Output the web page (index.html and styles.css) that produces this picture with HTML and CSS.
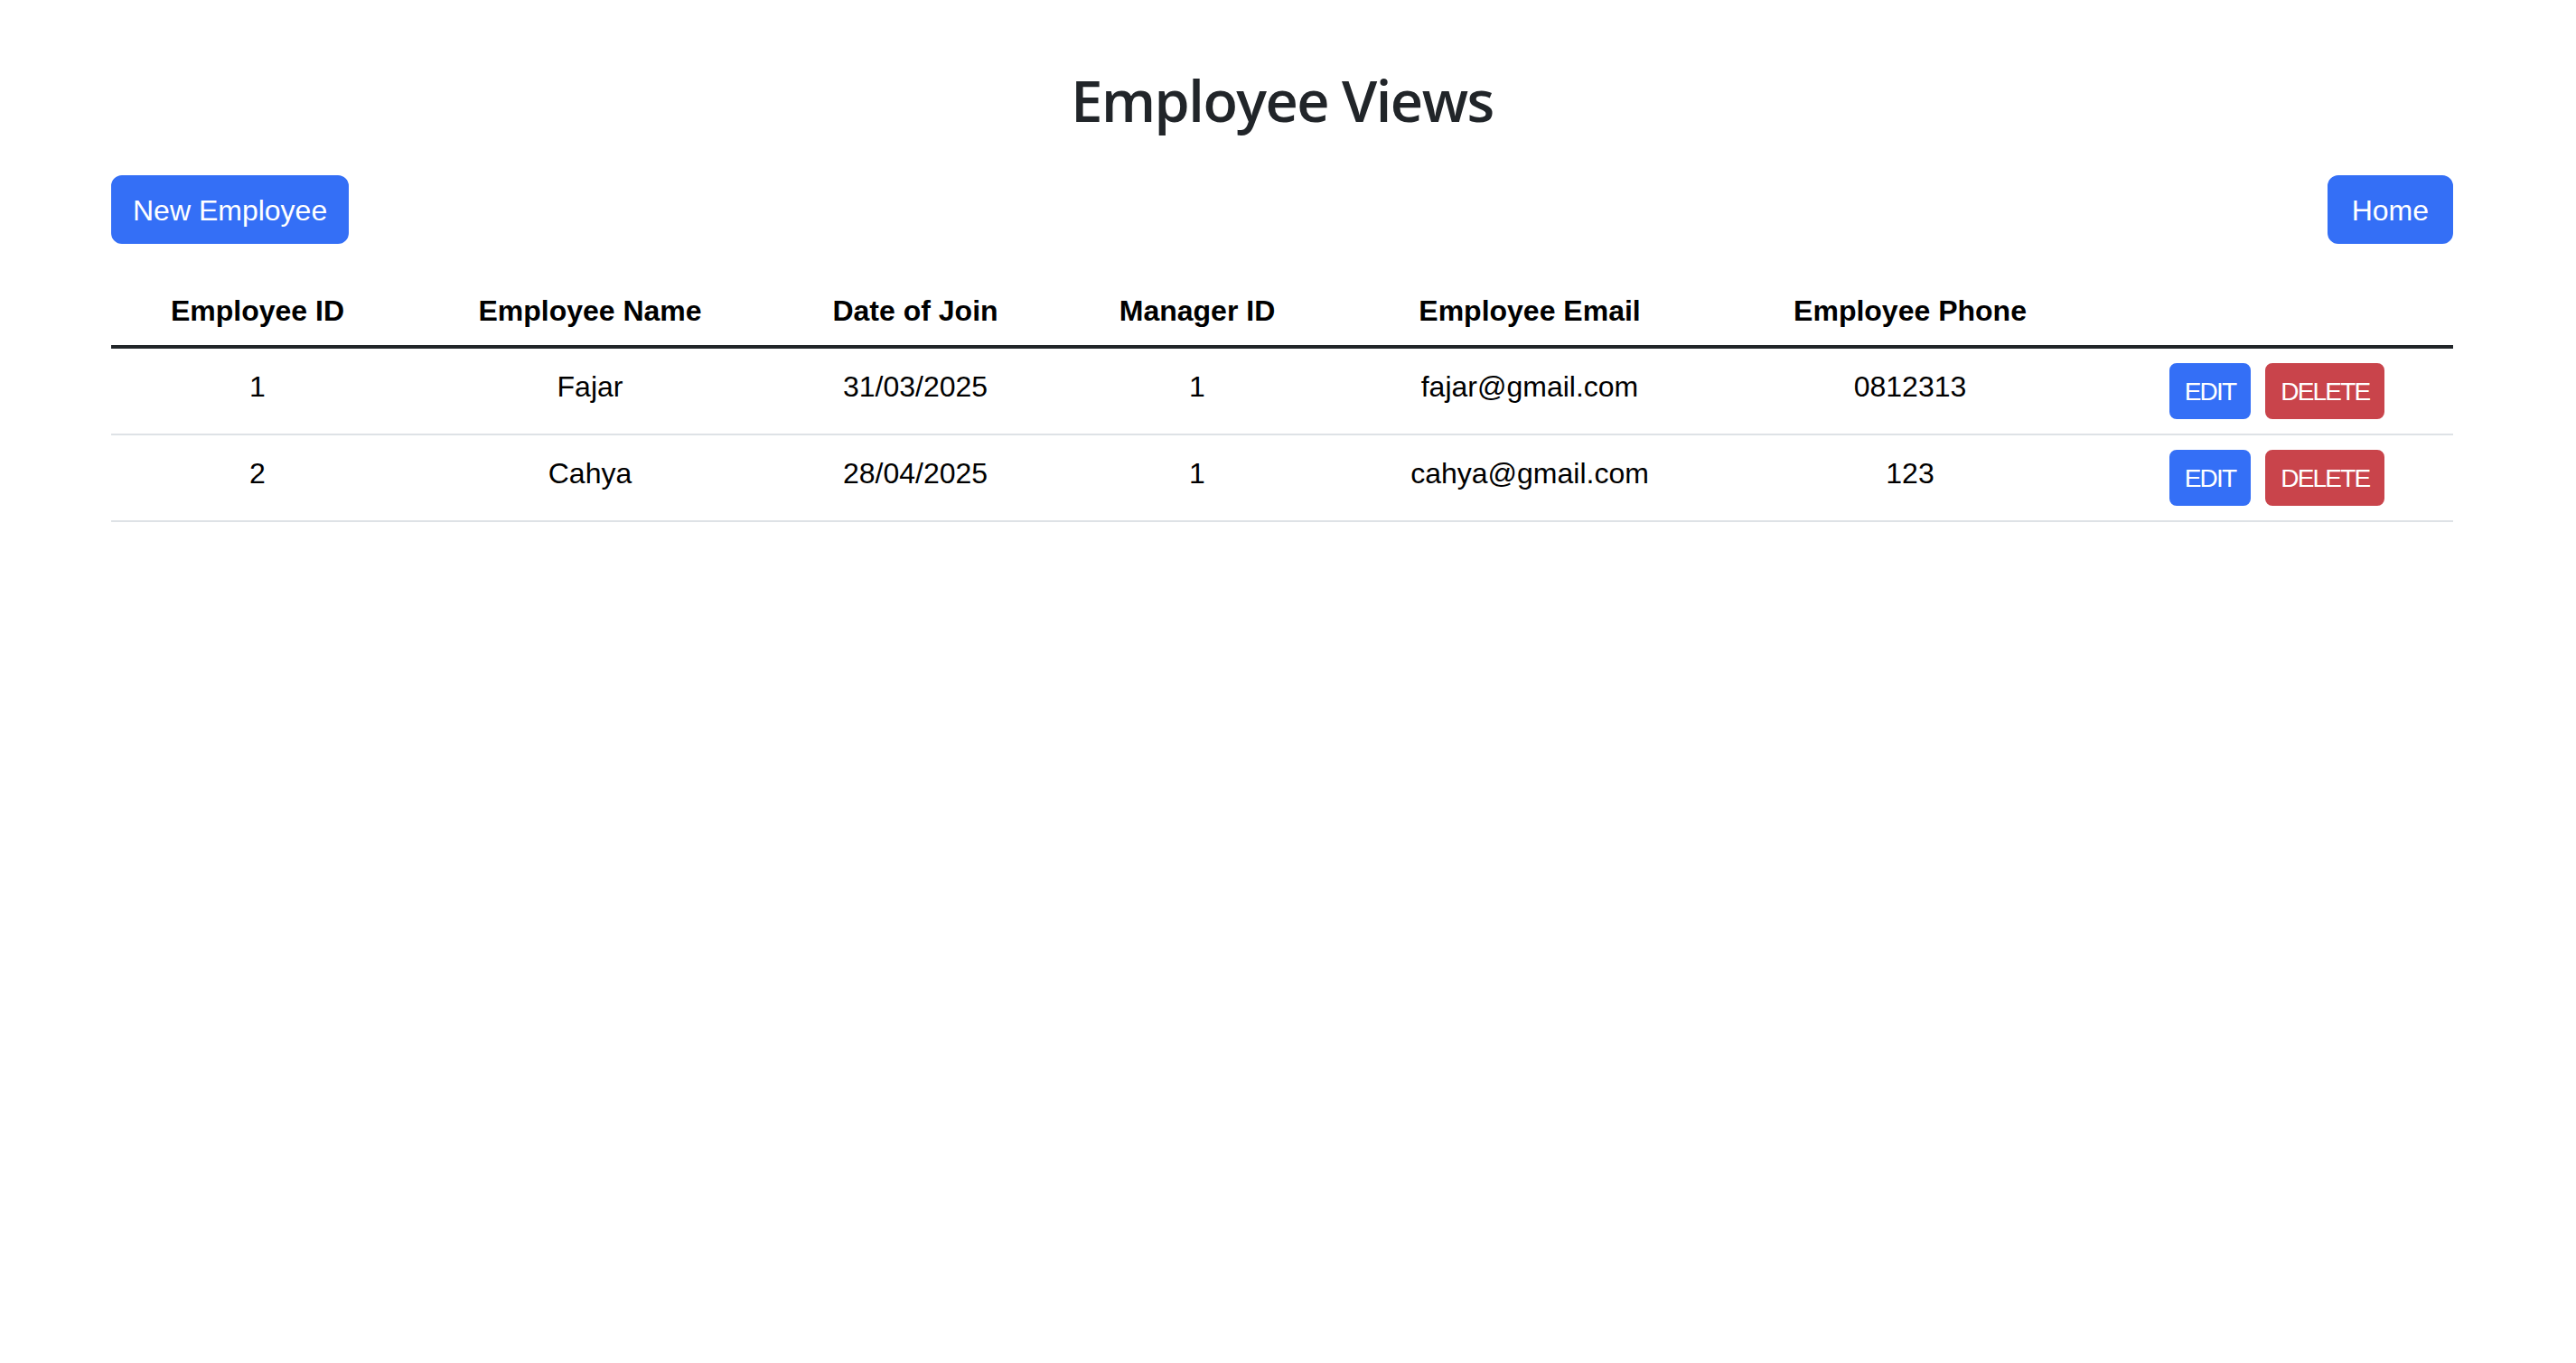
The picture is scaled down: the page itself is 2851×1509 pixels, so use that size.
FILE: index.html
```html
<!DOCTYPE html>
<html lang="en">
<head>
<meta charset="utf-8">
<title>Employee Views</title>
<link rel="stylesheet" href="styles.css">
</head>
<body>
<div class="page">
  <h2 class="title">Employee Views</h2>
  <div class="toolbar">
    <a class="btn btn-primary" href="#">New Employee</a>
    <a class="btn btn-primary btn-home" href="#">Home</a>
  </div>
  <table class="emp-table">
    <colgroup>
      <col class="c-id">
      <col class="c-name">
      <col class="c-date">
      <col class="c-mgr">
      <col class="c-email">
      <col class="c-phone">
      <col class="c-act">
    </colgroup>
    <thead>
      <tr>
        <th>Employee ID</th>
        <th>Employee Name</th>
        <th>Date of Join</th>
        <th>Manager ID</th>
        <th>Employee Email</th>
        <th>Employee Phone</th>
        <th></th>
      </tr>
    </thead>
    <tbody>
      <tr>
        <td>1</td>
        <td>Fajar</td>
        <td>31/03/2025</td>
        <td>1</td>
        <td>fajar@gmail.com</td>
        <td>0812313</td>
        <td class="act-cell"><div class="actions"><a class="btn btn-sm btn-primary" href="#">EDIT</a><a class="btn btn-sm btn-danger" href="#">DELETE</a></div></td>
      </tr>
      <tr>
        <td>2</td>
        <td>Cahya</td>
        <td>28/04/2025</td>
        <td>1</td>
        <td>cahya@gmail.com</td>
        <td>123</td>
        <td class="act-cell"><div class="actions"><a class="btn btn-sm btn-primary" href="#">EDIT</a><a class="btn btn-sm btn-danger" href="#">DELETE</a></div></td>
      </tr>
    </tbody>
  </table>
</div>
</body>
</html>
```

FILE: styles.css
```css
html, body {
  margin: 0;
  padding: 0;
  background: #ffffff;
}

body {
  font-family: "Liberation Sans", Arial, sans-serif;
  color: #212529;
}

.page {
  width: 2592px;
  margin-left: 123px;
}

.title {
  margin: 72px 0 0;
  font-family: "Open Sans", "Liberation Sans", sans-serif;
  font-size: 63px;
  line-height: 77px;
  font-weight: 600;
  letter-spacing: -1.5px;
  text-align: center;
  color: #212529;
}

.toolbar {
  display: flex;
  justify-content: space-between;
  margin-top: 45px;
}

.btn {
  display: inline-block;
  font-size: 32px;
  line-height: 48px;
  padding: 13px 22px 11px;
  border: 2px solid transparent;
  border-radius: 12px;
  color: #ffffff;
  text-decoration: none;
  text-align: center;
}

.btn-home {
  padding-left: 25px;
  padding-right: 25px;
}

.btn-primary {
  background: #346ff6;
  border-color: #346ff6;
}

.btn-danger {
  background: #c9444b;
  border-color: #c9444b;
}

.btn-sm {
  font-size: 28px;
  line-height: 42px;
  padding: 9px 15px 7px;
  border-radius: 8px;
  letter-spacing: -1.8px;
}

.emp-table {
  margin-top: 32px;
  width: 100%;
  border-collapse: collapse;
  table-layout: fixed;
  color: #000000;
  font-size: 32px;
  line-height: 48px;
}

.c-id { width: 324px; }
.c-name { width: 412px; }
.c-date { width: 308px; }
.c-mgr { width: 316px; }
.c-email { width: 420px; }
.c-phone { width: 422px; }
.c-act { width: 390px; }

.emp-table th {
  font-weight: 700;
  padding: 18px 16px 14px;
  text-align: center;
  vertical-align: bottom;
  border-bottom: 4px solid #212529;
}

.emp-table td {
  padding: 18px 16px 14px;
  text-align: center;
  vertical-align: top;
  border-bottom: 2px solid #dee2e6;
}

.emp-table td.act-cell {
  padding: 16px;
}

.actions {
  display: flex;
  justify-content: center;
  gap: 16px;
}
```
